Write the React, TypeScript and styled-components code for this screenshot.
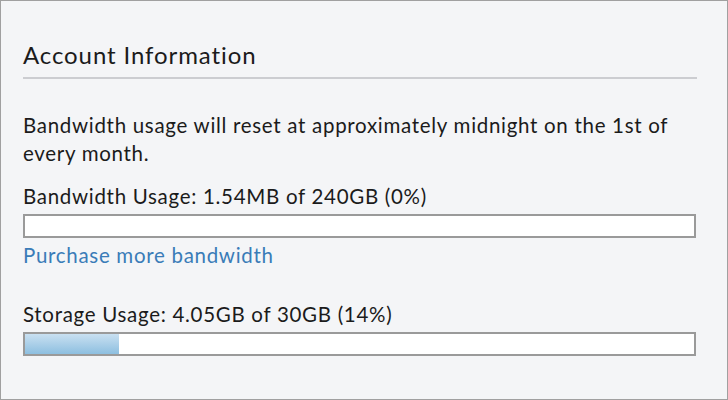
import React from 'react'
import styled, { createGlobalStyle } from 'styled-components'

const GlobalStyle = createGlobalStyle`
  html, body {
    margin: 0;
    padding: 0;
    background: #f4f5f7;
  }
  body {
    font-family: Lato, "Open Sans", "Liberation Sans", sans-serif;
    color: #1b1b1b;
  }
`

type Usage = {
  label: string
  percent: number
}

const usages: Usage[] = [
  { label: 'Bandwidth Usage: 1.54MB of 240GB (0%)', percent: 0 },
  { label: 'Storage Usage: 4.05GB of 30GB (14%)', percent: 14 },
]

export default function App() {
  return (
    <>
      <GlobalStyle />
      <Frame>
        <Heading>Account Information</Heading>
        <Note>
          Bandwidth usage will reset at approximately midnight on the 1st of every month.
        </Note>

        <Meter>
          <Label>{usages[0].label}</Label>
          <Bar>
            <Fill style={{ width: `${usages[0].percent}%` }} />
          </Bar>
          <Link href="#">Purchase more bandwidth</Link>
        </Meter>

        <Meter>
          <Label>{usages[1].label}</Label>
          <Bar>
            <Fill style={{ width: `${usages[1].percent}%` }} />
          </Bar>
        </Meter>
      </Frame>
    </>
  )
}

const Frame = styled.div`
  box-sizing: border-box;
  width: 728px;
  height: 400px;
  border: 1px solid #a0a0a0;
  padding: 38px 30px 0 22px;
  background: #f4f5f7;
`

const Heading = styled.h2`
  margin: 0;
  padding-bottom: 6px;
  border-bottom: 2px solid #cccdd1;
  font-size: 24px;
  font-weight: 400;
  letter-spacing: 0.9px;
  line-height: 32px;
  color: #1b1b1b;
`

const Note = styled.p`
  margin: 32px 0 0;
  font-size: 20.5px;
  letter-spacing: 0.7px;
  line-height: 28px;
`

const Meter = styled.div`
  display: flex;
  flex-direction: column;
  align-items: flex-start;
  margin-top: 15px;

  & + & {
    margin-top: 31px;
  }
`

const Label = styled.div`
  font-size: 20.5px;
  letter-spacing: 0.7px;
  line-height: 28px;
`

const Bar = styled.div`
  box-sizing: border-box;
  width: 673px;
  height: 24px;
  margin-top: 4px;
  border: 2px solid #9a9a9a;
  background: #ffffff;
`

const Fill = styled.div`
  height: 100%;
  background: linear-gradient(#c9e0f1, #8dbfe0);
`

const Link = styled.a`
  margin-top: 3px;
  font-size: 20.5px;
  letter-spacing: 0.7px;
  line-height: 28px;
  color: #3a7cb8;
  text-decoration: none;
`
